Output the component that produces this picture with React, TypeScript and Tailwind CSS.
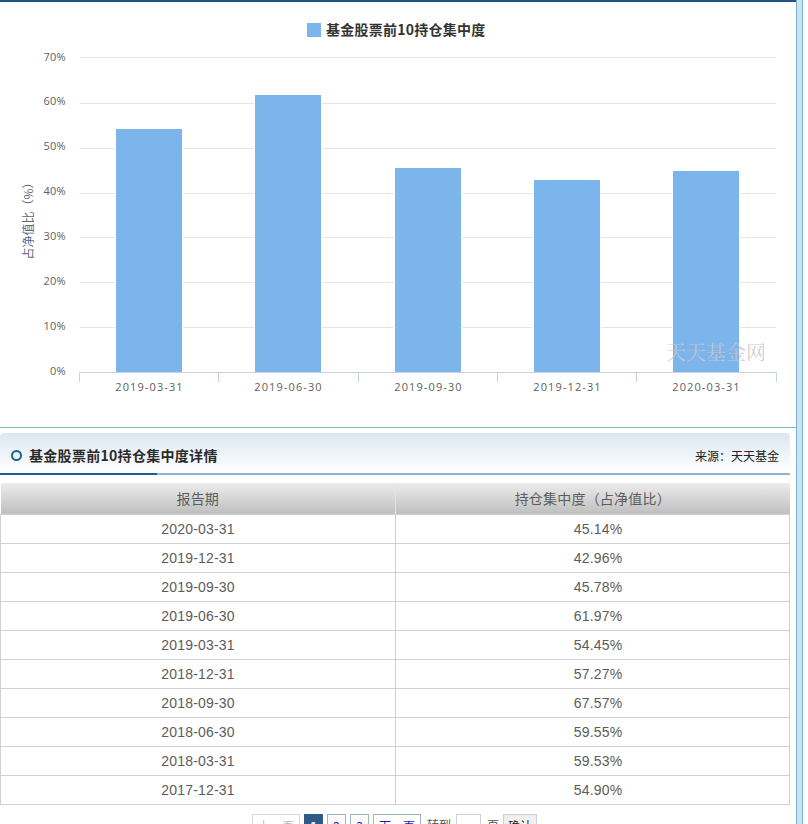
const rows = [
  ['2020-03-31', '45.14%'],
  ['2019-12-31', '42.96%'],
  ['2019-09-30', '45.78%'],
  ['2019-06-30', '61.97%'],
  ['2019-03-31', '54.45%'],
  ['2018-12-31', '57.27%'],
  ['2018-09-30', '67.57%'],
  ['2018-06-30', '59.55%'],
  ['2018-03-31', '59.53%'],
  ['2017-12-31', '54.90%'],
];

const bars = [
  { x: 116, top: 129, label: '2019-03-31' },
  { x: 255, top: 95, label: '2019-06-30' },
  { x: 395, top: 168, label: '2019-09-30' },
  { x: 534, top: 180, label: '2019-12-31' },
  { x: 673, top: 171, label: '2020-03-31' },
];
const grid = [
  { y: 57, ly: 57, label: '70%' },
  { y: 103, ly: 101, label: '60%' },
  { y: 148, ly: 146, label: '50%' },
  { y: 193, ly: 191, label: '40%' },
  { y: 237, ly: 236, label: '30%' },
  { y: 282, ly: 281, label: '20%' },
  { y: 327, ly: 326, label: '10%' },
  { y: 372, ly: 371, label: '0%' },
];
const ticks = [79.5, 218.5, 358.5, 497.5, 636.5, 776.5];

const cjk = '"Noto Sans CJK SC", sans-serif';

function Chart() {
  return (
    <svg width="796" height="425" viewBox="0 2 796 425" className="block">
      {grid.slice(0, 7).map((g) => (
        <rect key={g.y} x="80" y={g.y} width="696" height="1" fill="#e6e6e6" />
      ))}
      {bars.map((b) => (
        <g key={b.x}>
          <rect x={b.x - 1} y={b.top - 1} width="68" height={372 - b.top + 1} fill="#ffffff" />
          <rect x={b.x} y={b.top} width="66" height={372 - b.top} fill="#7cb4ec" />
          <text x={b.x + 33.5} y="391" textAnchor="middle" fontSize="11" letterSpacing="1.1" fill="#606060" fontFamily="Open Sans, sans-serif">
            {b.label}
          </text>
        </g>
      ))}
      {grid.map((g) => (
        <text key={g.label} x="66" y={g.ly + 4} textAnchor="end" fontSize="11" letterSpacing="0.3" fill="#606060" fontFamily="Open Sans, sans-serif">
          {g.label}
        </text>
      ))}
      <rect x="79" y="372" width="698" height="1" fill="#c6d2ea" />
      {ticks.map((t) => (
        <rect key={t} x={t - 0.5} y="372" width="1" height="10" fill="#c6d2ea" />
      ))}
      <text
        transform="translate(33 218) rotate(-90)"
        textAnchor="middle"
        fontSize="12"
        fill="#5f6680"
        fontFamily={cjk}
      >
        占净值比（%）
      </text>
      <rect x="307" y="23" width="14" height="14" fill="#7cb4ec" />
      <text x="326" y="34.5" fontSize="14" letterSpacing="0.25" fontWeight="700" fill="#333333" fontFamily={cjk}>
        基金股票前10持仓集中度
      </text>
      <text x="666" y="360" fontSize="20" fill="#c8c8c8" fillOpacity="0.85" fontFamily='"Noto Serif CJK SC", "Noto Sans CJK SC", serif'>
        天天基金网
      </text>
    </svg>
  );
}

function PageBtn({ children, className }: { children: React.ReactNode; className: string }) {
  return (
    <span className={`flex h-[24px] items-start justify-center border pt-[2px] text-[12px] leading-[18px] ${className}`}>
      {children}
    </span>
  );
}

export default function App() {
  return (
    <div className="flex h-[824px] w-[808px] overflow-hidden bg-white" style={{ fontFamily: '"Liberation Sans", "Noto Sans CJK SC", sans-serif' }}>
      <div className="w-[796px] shrink-0">
        <div className="h-[2px] bg-[#1f5580]" />
        <Chart />
        <div className="h-px bg-[#86b2c9]" />

        <div className="mt-[5px] w-[790px]">
          <div className="flex h-[40px] items-center justify-between rounded-t-[4px] bg-gradient-to-b from-[#dce7f2] to-white pt-[5px]">
            <div className="flex items-center">
              <span className="ml-[11px] h-[11px] w-[11px] rounded-full border-2 border-[#1f6288]" />
              <span className="ml-[7px] text-[14px] font-bold tracking-[0.3px] text-[#2b2b2b]" style={{ fontFamily: cjk }}>
                基金股票前10持仓集中度详情
              </span>
            </div>
            <span className="mr-[11px] text-[12px] text-[#222222]" style={{ fontFamily: cjk }}>
              来源：天天基金
            </span>
          </div>
          <div className="flex h-[2px]">
            <div className="w-[157px] bg-[#1c6088]" />
            <div className="flex-1 bg-[#8ab6cf]" />
          </div>
        </div>

        <table className="mt-[8px] w-[790px] table-fixed border-collapse text-[14px] tracking-[0.2px] text-[#5c5c5c]">
          <colgroup>
            <col className="w-[395px]" />
            <col />
          </colgroup>
          <thead>
            <tr className="h-[31px] bg-gradient-to-b from-[#ececec] to-[#bfbfbf]">
              <th className="border-r border-r-[#e4e4e4] p-0 text-[14px] font-normal" style={{ fontFamily: cjk }}>
                报告期
              </th>
              <th className="p-0 text-[14px] font-normal" style={{ fontFamily: cjk }}>
                持仓集中度（占净值比）
              </th>
            </tr>
          </thead>
          <tbody>
            {rows.map((r) => (
              <tr key={r[0]} className="h-[29px]">
                <td className="border border-[#d0d0d0] p-0 pt-[2px] text-center">{r[0]}</td>
                <td className="border border-[#d0d0d0] p-0 pt-[2px] pl-[11px] text-center">{r[1]}</td>
              </tr>
            ))}
          </tbody>
        </table>

        <div className="mt-[9px] flex items-start pl-[252px]" style={{ fontFamily: cjk }}>
          <PageBtn className="w-[48px] border-[#d8d8d8] text-[#bbbbbb]">上一页</PageBtn>
          <PageBtn className="ml-[4px] w-[19px] border-[#2e5a8a] bg-[#2e5a8a] font-bold text-white">1</PageBtn>
          <PageBtn className="ml-[4px] w-[19px] border-[#9fb3c8] text-[#1a1ab0]">2</PageBtn>
          <PageBtn className="ml-[4px] w-[19px] border-[#9fb3c8] text-[#1a1ab0]">3</PageBtn>
          <PageBtn className="ml-[4px] w-[48px] border-[#9fb3c8] text-[#1a1ab0]">下一页</PageBtn>
          <span className="ml-[6px] pt-[2px] text-[12px] leading-[18px] text-[#555555]">转到</span>
          <span className="ml-[5px] h-[24px] w-[25px] border border-[#d0d0d0]" />
          <span className="ml-[6px] pt-[2px] text-[12px] leading-[18px] text-[#555555]">页</span>
          <PageBtn className="ml-[4px] w-[34px] border-[#d0d0d0] bg-[#f0f0f0] text-[#222222]">确认</PageBtn>
        </div>
      </div>
      <div className="h-full w-[7px] shrink-0 border-x border-x-[#79b3d3] bg-[#cfe2f1]" />
    </div>
  );
}
